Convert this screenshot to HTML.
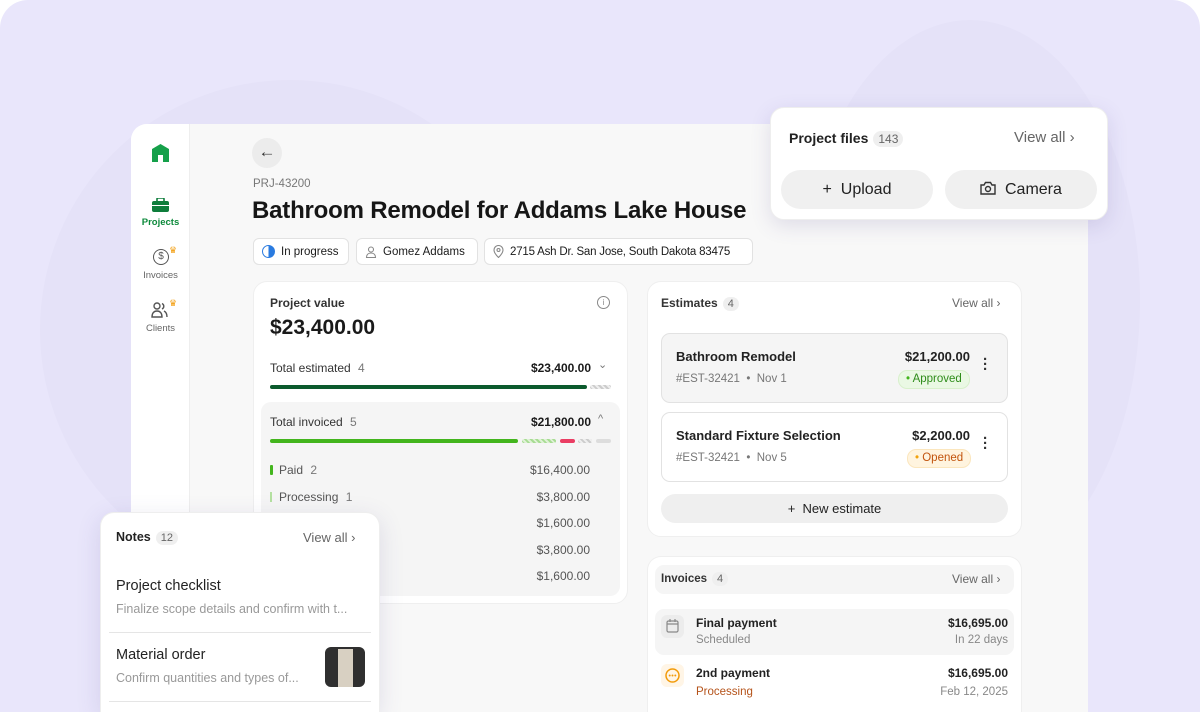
<!DOCTYPE html>
<html><head><meta charset="utf-8"><style>
*{box-sizing:border-box;margin:0;padding:0}
html,body{width:1200px;height:712px;overflow:hidden}
body{background:#fff;font-family:"Liberation Sans",sans-serif;color:#1a1a1a;position:relative}
.bg{position:absolute;left:0;top:0;width:1200px;height:712px;border-radius:28px 28px 0 0;background:#e9e6fb;overflow:hidden}
.blob{position:absolute;border-radius:50%}
.a{position:absolute;white-space:nowrap}
.win{left:131px;top:124px;width:957px;height:588px;background:#f8f8f8;border-radius:16px 0 0 0;overflow:hidden}
.side{left:0;top:0;width:59px;height:588px;background:#fff;border-right:1px solid #eee}
.card{background:#fff;border-radius:14px;border:1px solid #efefef}
.pill{position:absolute;height:27px;border:1px solid #e2e2e2;border-radius:6px;background:#fff;font-size:11.5px;display:flex;align-items:center;gap:6px;padding:0 8px;top:238px;white-space:nowrap;overflow:hidden}
.cnt{display:inline-block;background:#efefef;border-radius:9px;font-size:11px;color:#666;padding:1px 5px;margin-left:5px}
.va{color:#666;font-size:12px}
.grey{color:#777}
</style></head><body>
<div class="bg">
<div class="blob" style="left:40px;top:80px;width:500px;height:500px;background:#e5e2f8"></div>
<div class="blob" style="left:800px;top:20px;width:340px;height:560px;background:#e5e2f8"></div>
</div>
<div class="a win">
<div class="a side">
 <svg class="a" style="left:19px;top:19px" width="21" height="20" viewBox="0 0 21 20"><path d="M2 6 L10.5 1 L19 6 V19 H13 V12 H8 V19 H2 Z" fill="#15a04a"/><rect x="9" y="14" width="3" height="5" fill="#fff"/></svg>
 <svg class="a" style="left:21px;top:74px" width="17" height="14" viewBox="0 0 17 14"><rect x="5" y="0" width="7" height="4" rx="1" fill="none" stroke="#0e7d3b" stroke-width="1.6"/><rect x="0" y="3" width="17" height="11" rx="2" fill="#0e7d3b"/><rect x="0" y="7" width="17" height="1" fill="#fff"/></svg>
 <div class="a" style="left:0;width:59px;top:93px;text-align:center;font-size:9.5px;color:#0e8a3c;font-weight:bold">Projects</div>
 <div class="a" style="left:22px;top:125px;width:16px;height:16px;border:1.5px solid #555;border-radius:50%;font-size:10px;text-align:center;line-height:13px;color:#555">$</div>
 <div class="a" style="left:38px;top:121px;color:#f29b0a;font-size:9px">♛</div>
 <div class="a" style="left:0;width:59px;top:146px;text-align:center;font-size:9.5px;color:#666">Invoices</div>
 <svg class="a" style="left:20px;top:178px" width="18" height="16" viewBox="0 0 18 16" fill="none" stroke="#555" stroke-width="1.4"><circle cx="6" cy="4" r="3"/><path d="M1 15c0-4 2-6 5-6s5 2 5 6z"/><path d="M11 1.5a3 3 0 010 5.5M13 9c2 1 3 3 3 6"/></svg>
 <div class="a" style="left:38px;top:174px;color:#f29b0a;font-size:9px">♛</div>
 <div class="a" style="left:0;width:59px;top:199px;text-align:center;font-size:9.5px;color:#666">Clients</div>
</div>
<div class="a" style="left:121px;top:14px;width:30px;height:30px;border-radius:50%;background:#ececec;text-align:center;line-height:28px;font-size:17px;color:#333">←</div>
<div class="a" style="left:122px;top:54px;font-size:11.5px;color:#777">PRJ-43200</div>
<div class="a" style="left:121px;top:73px;font-size:24px;font-weight:bold;letter-spacing:-0.2px;color:#161616">Bathroom Remodel for Addams Lake House</div>
</div>
<div class="pill" style="left:253px;width:96px"><span style="flex:none;width:13px;height:13px;border:1.8px solid #2a7be0;border-radius:50%;background:linear-gradient(90deg,#fff 50%,#2a7be0 50%)"></span>In progress</div>
<div class="pill" style="left:356px;width:122px"><svg width="12" height="12" viewBox="0 0 12 12" fill="none" stroke="#888" stroke-width="1.1"><circle cx="6" cy="3.5" r="2.5"/><path d="M1.5 11.5c0-3 2-4.5 4.5-4.5s4.5 1.5 4.5 4.5z"/></svg>Gomez Addams</div>
<div class="pill" style="left:484px;width:269px;letter-spacing:-0.2px"><svg width="11" height="13" viewBox="0 0 11 13" fill="none" stroke="#888" stroke-width="1.1"><path d="M5.5 12.5S1 8 1 5a4.5 4.5 0 019 0c0 3-4.5 7.5-4.5 7.5z"/><circle cx="5.5" cy="5" r="1.5"/></svg>2715 Ash Dr. San Jose, South Dakota 83475</div>

<!-- project value -->
<div class="a card" style="left:253px;top:281px;width:375px;height:323px"></div>
<div class="a" style="left:270px;top:296px;font-size:12px;font-weight:bold;color:#333">Project value</div>
<div class="a" style="left:597px;top:296px;width:13px;height:13px;border:1.2px solid #888;border-radius:50%;font-size:8px;text-align:center;line-height:11px;color:#888">i</div>
<div class="a" style="left:270px;top:316px;font-size:21px;font-weight:bold">$23,400.00</div>
<div class="a" style="left:270px;top:361px;font-size:12px;color:#333">Total estimated <span class="grey" style="margin-left:4px">4</span></div>
<div class="a" style="left:500px;top:361px;width:91px;font-size:12px;font-weight:bold;text-align:right">$23,400.00</div>
<div class="a" style="left:598px;top:358px;font-size:11px;color:#777">⌄</div>
<div class="a" style="left:270px;top:385px;width:317px;height:4px;border-radius:2px;background:#0b5a2d"></div>
<div class="a" style="left:590px;top:385px;width:21px;height:4px;border-radius:2px;background:repeating-linear-gradient(45deg,#ccc 0 2px,#eee 2px 4px)"></div>
<div class="a" style="left:261px;top:402px;width:359px;height:194px;border-radius:10px;background:#f5f5f5"></div>
<div class="a" style="left:270px;top:415px;font-size:12px;color:#333">Total invoiced <span class="grey" style="margin-left:4px">5</span></div>
<div class="a" style="left:500px;top:415px;width:91px;font-size:12px;font-weight:bold;text-align:right">$21,800.00</div>
<div class="a" style="left:598px;top:413px;font-size:11px;color:#777">^</div>
<div class="a" style="left:270px;top:439px;width:248px;height:4px;border-radius:2px;background:#43b51d"></div>
<div class="a" style="left:522px;top:439px;width:34px;height:4px;border-radius:2px;background:repeating-linear-gradient(45deg,#a7dc93 0 2px,#dff1d6 2px 4px)"></div>
<div class="a" style="left:560px;top:439px;width:15px;height:4px;border-radius:2px;background:#ea3d63"></div>
<div class="a" style="left:578px;top:439px;width:14px;height:4px;border-radius:2px;background:repeating-linear-gradient(45deg,#ccc 0 2px,#eee 2px 4px)"></div>
<div class="a" style="left:596px;top:439px;width:15px;height:4px;border-radius:2px;background:#ddd"></div>
<div class="a" style="left:270px;top:465px;width:3px;height:10px;background:#43b51d;border-radius:1px"></div>
<div class="a" style="left:279px;top:463px;font-size:12px;color:#555">Paid <span class="grey" style="margin-left:4px">2</span></div>
<div class="a" style="left:270px;top:492px;width:2px;height:10px;background:#b4e0a0"></div>
<div class="a" style="left:279px;top:490px;font-size:12px;color:#555">Processing <span class="grey" style="margin-left:4px">1</span></div>
<div class="a" style="left:490px;top:457px;width:100px;font-size:12px;color:#555;text-align:right;line-height:26.5px">$16,400.00<br>$3,800.00<br>$1,600.00<br>$3,800.00<br>$1,600.00</div>

<!-- estimates -->
<div class="a card" style="left:647px;top:281px;width:375px;height:256px"></div>
<div class="a" style="left:661px;top:296px;font-size:12px;font-weight:bold;color:#333">Estimates<span class="cnt" style="font-weight:normal">4</span></div>
<div class="a va" style="left:952px;top:296px">View all ›</div>
<div class="a" style="left:661px;top:333px;width:347px;height:70px;border:1px solid #e2e2e2;border-radius:9px;background:#f5f5f5"></div>
<div class="a" style="left:661px;top:412px;width:347px;height:70px;border:1px solid #e2e2e2;border-radius:9px;background:#fff"></div>
<div class="a" style="left:676px;top:349px;font-size:13px;font-weight:bold;color:#222">Bathroom Remodel</div>
<div class="a" style="left:676px;top:373px;font-size:11.5px;color:#777">#EST-32421 &nbsp;•&nbsp; Nov 1</div>
<div class="a" style="left:860px;top:349px;width:110px;font-size:13px;font-weight:bold;text-align:right;color:#222">$21,200.00</div>
<div class="a" style="left:898px;top:370px;height:19px;border-radius:9px;background:#eaf8e4;border:1px solid #d8f0cc;color:#2e8c1a;font-size:11.5px;padding:2px 7px"><span style="color:#43b51d">•</span> Approved</div>
<div class="a" style="left:983px;top:357px;font-size:15px;font-weight:bold;line-height:5px;color:#333">·<br>·<br>·</div>
<div class="a" style="left:676px;top:428px;font-size:13px;font-weight:bold;color:#222">Standard Fixture Selection</div>
<div class="a" style="left:676px;top:452px;font-size:11.5px;color:#777">#EST-32421 &nbsp;•&nbsp; Nov 5</div>
<div class="a" style="left:860px;top:428px;width:110px;font-size:13px;font-weight:bold;text-align:right;color:#222">$2,200.00</div>
<div class="a" style="left:907px;top:449px;height:19px;border-radius:9px;background:#fff4df;border:1px solid #fbe6bd;color:#c2540e;font-size:11.5px;padding:2px 7px"><span style="color:#f2a20c">•</span> Opened</div>
<div class="a" style="left:983px;top:436px;font-size:15px;font-weight:bold;line-height:5px;color:#333">·<br>·<br>·</div>
<div class="a" style="left:661px;top:494px;width:347px;height:29px;border-radius:15px;background:#efefef;text-align:center;line-height:29px;font-size:13px;color:#222">+&nbsp; New estimate</div>

<!-- invoices -->
<div class="a card" style="left:647px;top:556px;width:375px;height:156px;border-radius:14px 14px 0 0;border-bottom:none"></div>
<div class="a" style="left:655px;top:565px;width:359px;height:29px;border-radius:9px;background:#f5f5f5"></div>
<div class="a" style="left:661px;top:572px;font-size:11.5px;font-weight:bold;color:#333">Invoices<span class="cnt" style="font-weight:normal">4</span></div>
<div class="a va" style="left:952px;top:572px">View all ›</div>
<div class="a" style="left:655px;top:609px;width:359px;height:46px;border-radius:9px;background:#f5f5f5"></div>
<div class="a" style="left:661px;top:615px;width:23px;height:23px;border-radius:6px;background:#ececec"></div>
<svg class="a" style="left:666px;top:619px" width="13" height="14" viewBox="0 0 13 14" fill="none" stroke="#888" stroke-width="1.2"><rect x="1" y="2" width="11" height="11" rx="1.5"/><path d="M1 5h11M4 0v3M9 0v3"/></svg>
<div class="a" style="left:696px;top:616px;font-size:12px;font-weight:bold;color:#222">Final payment</div>
<div class="a" style="left:696px;top:634px;font-size:11.5px;color:#888">Scheduled</div>
<div class="a" style="left:900px;top:616px;width:108px;text-align:right;font-size:12px;font-weight:bold;color:#222">$16,695.00</div>
<div class="a" style="left:900px;top:634px;width:108px;text-align:right;font-size:11.5px;color:#888">In 22 days</div>
<div class="a" style="left:661px;top:664px;width:23px;height:23px;border-radius:6px;background:#fff5e6"></div>
<svg class="a" style="left:665px;top:668px" width="15" height="15" viewBox="0 0 15 15"><circle cx="7.5" cy="7.5" r="6.5" fill="none" stroke="#f29b0a" stroke-width="1.5"/><circle cx="4.7" cy="7.5" r="1" fill="#f29b0a"/><circle cx="7.5" cy="7.5" r="1" fill="#f29b0a"/><circle cx="10.3" cy="7.5" r="1" fill="#f29b0a"/></svg>
<div class="a" style="left:696px;top:666px;font-size:12px;font-weight:bold;color:#222">2nd payment</div>
<div class="a" style="left:696px;top:686px;font-size:11.5px;color:#b5531a">Processing</div>
<div class="a" style="left:900px;top:666px;width:108px;text-align:right;font-size:12px;font-weight:bold;color:#222">$16,695.00</div>
<div class="a" style="left:900px;top:686px;width:108px;text-align:right;font-size:11.5px;color:#888">Feb 12, 2025</div>

<!-- project files -->
<div class="a" style="left:770px;top:107px;width:338px;height:113px;background:#fff;border-radius:14px;box-shadow:0 6px 20px rgba(80,70,140,.15);border:1px solid #eee"></div>
<div class="a" style="left:789px;top:130px;font-size:14px;font-weight:bold;color:#222">Project files<span class="cnt" style="font-weight:normal;font-size:12px">143</span></div>
<div class="a" style="left:1014px;top:129px;font-size:15px;color:#666">View all ›</div>
<div class="a" style="left:781px;top:170px;width:152px;height:39px;border-radius:20px;background:#f0f0f0;text-align:center;line-height:39px;font-size:16px;color:#222">+&nbsp; Upload</div>
<div class="a" style="left:945px;top:170px;width:152px;height:39px;border-radius:20px;background:#f0f0f0;text-align:center;line-height:39px;font-size:16px;color:#222"><svg width="16" height="14" viewBox="0 0 16 14" style="vertical-align:-1px" fill="none" stroke="#333" stroke-width="1.4"><path d="M1 4h3l1.5-2.5h5L12 4h3v9H1z"/><circle cx="8" cy="8" r="2.5"/></svg>&nbsp; Camera</div>

<!-- notes -->
<div class="a" style="left:100px;top:512px;width:280px;height:200px;background:#fff;border-radius:14px 14px 0 0;box-shadow:0 6px 24px rgba(80,70,140,.15);border:1px solid #eee;border-bottom:none"></div>
<div class="a" style="left:116px;top:530px;font-size:12.5px;font-weight:bold;color:#222">Notes<span class="cnt" style="font-weight:normal">12</span></div>
<div class="a" style="left:303px;top:530px;font-size:13px;color:#666">View all ›</div>
<div class="a" style="left:116px;top:578px;font-size:14.5px;color:#222">Project checklist</div>
<div class="a" style="left:116px;top:602px;font-size:12.5px;color:#999">Finalize scope details and confirm with t...</div>
<div class="a" style="left:109px;top:632px;width:262px;height:1px;background:#e5e5e5"></div>
<div class="a" style="left:116px;top:647px;font-size:14.5px;color:#222">Material order</div>
<div class="a" style="left:116px;top:671px;font-size:12.5px;color:#999">Confirm quantities and types of...</div>
<div class="a" style="left:325px;top:647px;width:40px;height:40px;border-radius:6px;background:#2f2f2f;overflow:hidden"><div style="margin:2px auto 0;width:15px;height:38px;background:#d8d0c2"></div></div>
<div class="a" style="left:109px;top:701px;width:262px;height:1px;background:#e5e5e5"></div>
</body></html>
